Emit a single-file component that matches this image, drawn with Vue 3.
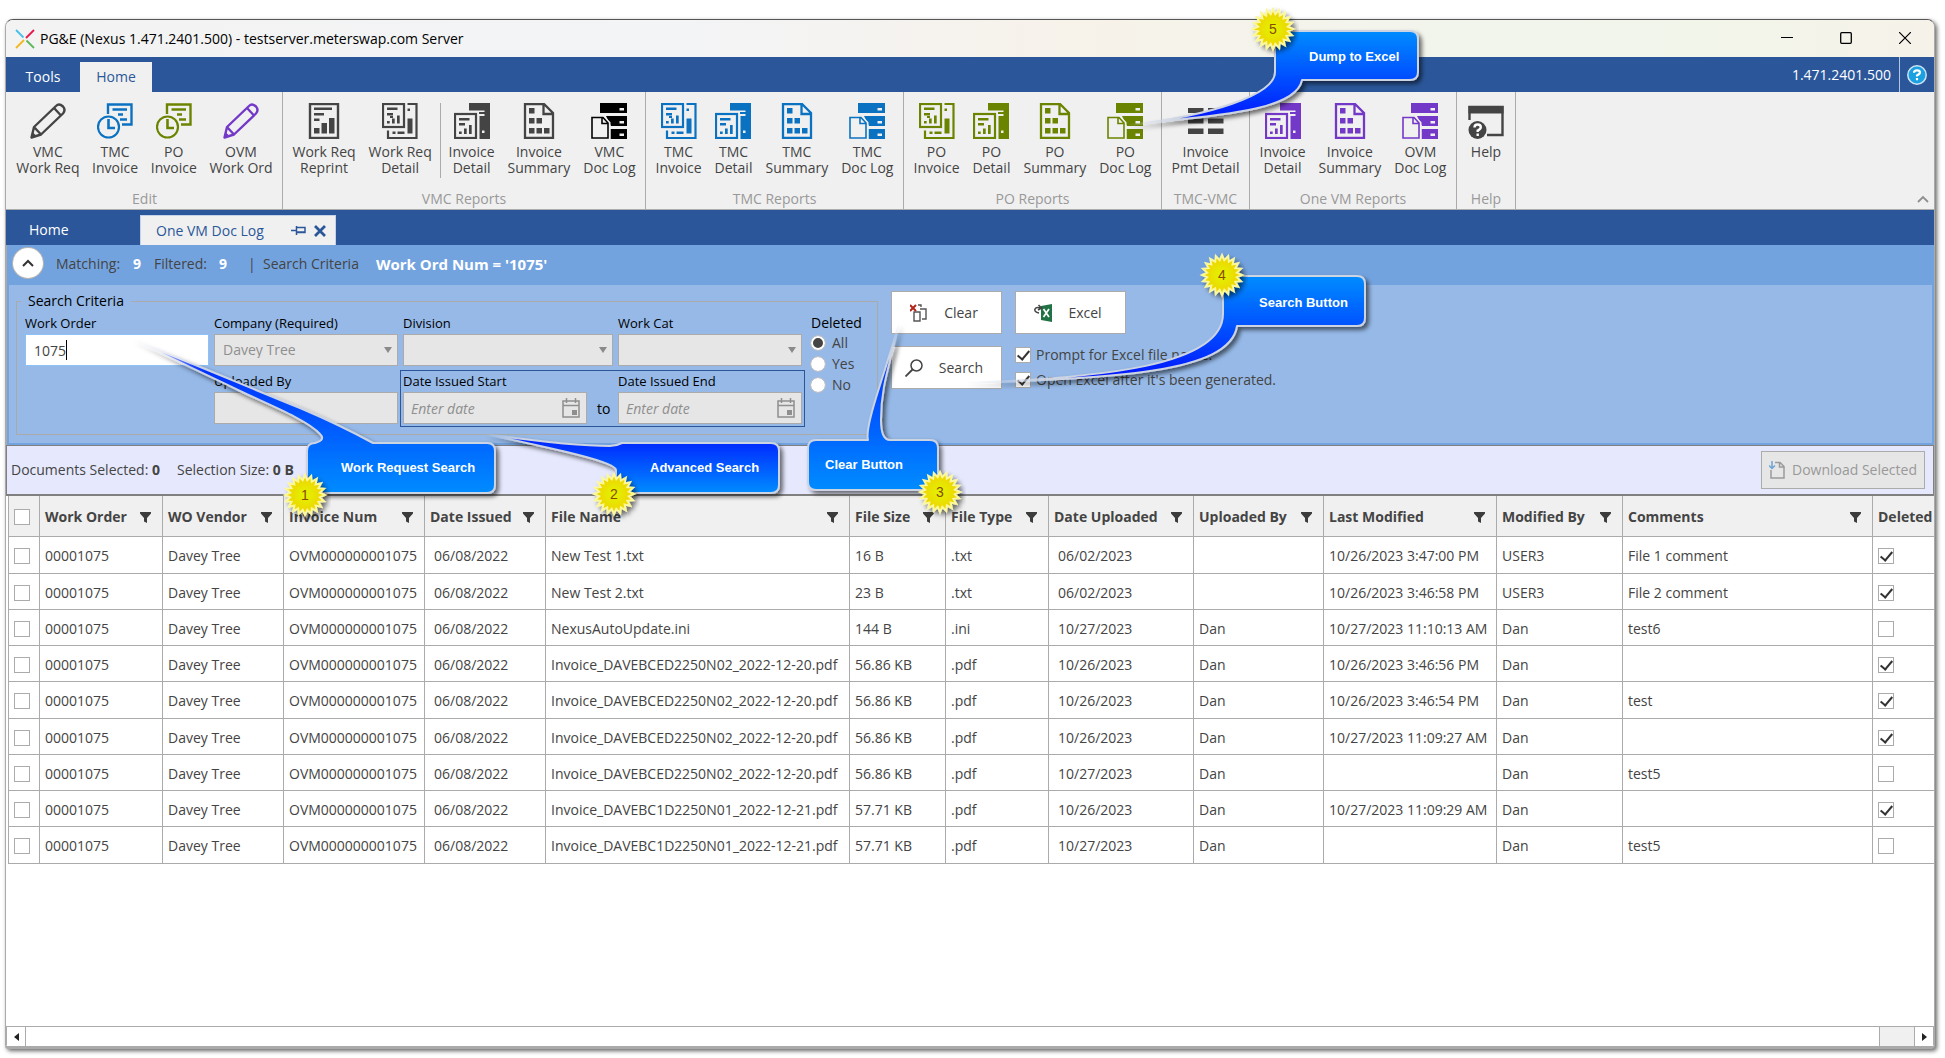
<script setup>
import { ref } from 'vue'

const dark = '#444444'
const blue = '#0b72c1'
const green = '#6b8400'
const purple = '#7338c8'

const groups = [
  {
    name: 'Edit',
    width: 276,
    items: [
      { icon: 'pencil', color: dark, top: 'VMC', bottom: 'Work Req' },
      { icon: 'clock', color: blue, top: 'TMC', bottom: 'Invoice' },
      { icon: 'clock', color: green, top: 'PO', bottom: 'Invoice' },
      { icon: 'pencil', color: purple, top: 'OVM', bottom: 'Work Ord' },
    ],
  },
  {
    name: 'VMC Reports',
    width: 363,
    items: [
      { icon: 'report', color: dark, top: 'Work Req', bottom: 'Reprint' },
      { icon: 'copies', color: dark, top: 'Work Req', bottom: 'Detail' },
      { icon: 'binder', color: dark, top: 'Invoice', bottom: 'Detail', divided: true },
      { icon: 'summary', color: dark, top: 'Invoice', bottom: 'Summary' },
      { icon: 'doclog', color: '#000000', top: 'VMC', bottom: 'Doc Log' },
    ],
  },
  {
    name: 'TMC Reports',
    width: 258,
    items: [
      { icon: 'copies', color: blue, top: 'TMC', bottom: 'Invoice' },
      { icon: 'binder', color: blue, top: 'TMC', bottom: 'Detail' },
      { icon: 'summary', color: blue, top: 'TMC', bottom: 'Summary' },
      { icon: 'doclog', color: blue, top: 'TMC', bottom: 'Doc Log' },
    ],
  },
  {
    name: 'PO Reports',
    width: 258,
    items: [
      { icon: 'copies', color: green, top: 'PO', bottom: 'Invoice' },
      { icon: 'binder', color: green, top: 'PO', bottom: 'Detail' },
      { icon: 'summary', color: green, top: 'PO', bottom: 'Summary' },
      { icon: 'doclog', color: green, top: 'PO', bottom: 'Doc Log' },
    ],
  },
  {
    name: 'TMC-VMC',
    width: 88,
    items: [{ icon: 'payment', color: dark, top: 'Invoice', bottom: 'Pmt Detail' }],
  },
  {
    name: 'One VM Reports',
    width: 207,
    items: [
      { icon: 'binder', color: purple, top: 'Invoice', bottom: 'Detail' },
      { icon: 'summary', color: purple, top: 'Invoice', bottom: 'Summary' },
      { icon: 'doclog', color: purple, top: 'OVM', bottom: 'Doc Log' },
    ],
  },
  {
    name: 'Help',
    width: 59,
    items: [{ icon: 'help', color: dark, top: 'Help', bottom: '' }],
  },
]

const workOrder = ref('1075')
const deletedFilter = ref('All')
const promptName = ref(true)
const openAfter = ref(true)

const columns = [
  { title: 'Work Order', width: 123 },
  { title: 'WO Vendor', width: 121 },
  { title: 'Invoice Num', width: 141 },
  { title: 'Date Issued', width: 121 },
  { title: 'File Name', width: 304 },
  { title: 'File Size', width: 96 },
  { title: 'File Type', width: 103 },
  { title: 'Date Uploaded', width: 145 },
  { title: 'Uploaded By', width: 130 },
  { title: 'Last Modified', width: 173 },
  { title: 'Modified By', width: 126 },
  { title: 'Comments', width: null },
]

const shared = ['00001075', 'Davey Tree', 'OVM000000001075', '06/08/2022']
const rows = [
  [['New Test 1.txt', '16 B', '.txt', '06/02/2023', '', '10/26/2023 3:47:00 PM', 'USER3', 'File 1 comment'], true],
  [['New Test 2.txt', '23 B', '.txt', '06/02/2023', '', '10/26/2023 3:46:58 PM', 'USER3', 'File 2 comment'], true],
  [['NexusAutoUpdate.ini', '144 B', '.ini', '10/27/2023', 'Dan', '10/27/2023 11:10:13 AM', 'Dan', 'test6'], false],
  [['Invoice_DAVEBCED2250N02_2022-12-20.pdf', '56.86 KB', '.pdf', '10/26/2023', 'Dan', '10/26/2023 3:46:56 PM', 'Dan', ''], true],
  [['Invoice_DAVEBCED2250N02_2022-12-20.pdf', '56.86 KB', '.pdf', '10/26/2023', 'Dan', '10/26/2023 3:46:54 PM', 'Dan', 'test'], true],
  [['Invoice_DAVEBCED2250N02_2022-12-20.pdf', '56.86 KB', '.pdf', '10/26/2023', 'Dan', '10/27/2023 11:09:27 AM', 'Dan', ''], true],
  [['Invoice_DAVEBCED2250N02_2022-12-20.pdf', '56.86 KB', '.pdf', '10/27/2023', 'Dan', '', 'Dan', 'test5'], false],
  [['Invoice_DAVEBC1D2250N01_2022-12-21.pdf', '57.71 KB', '.pdf', '10/26/2023', 'Dan', '10/27/2023 11:09:29 AM', 'Dan', ''], true],
  [['Invoice_DAVEBC1D2250N01_2022-12-21.pdf', '57.71 KB', '.pdf', '10/27/2023', 'Dan', '', 'Dan', 'test5'], false],
].map(([cells, deleted]) => ({ cells: [...shared, ...cells], deleted }))

// Starburst badge outline: alternating outer and inner radius.
const points = 20
const burst = Array.from({ length: points * 2 }, (_, i) => {
  const r = i % 2 ? 15 : 20
  const a = (Math.PI * i) / points - Math.PI / 2
  return `${(r * Math.cos(a)).toFixed(1)},${(r * Math.sin(a)).toFixed(1)}`
}).join(' ')

const callouts = [
  {
    n: 1, text: 'Work Request Search', tx: 341, ty: 472, bx: 305, by: 495, grad: 'up',
    tip: [133, 340, 205, 372],
    d: 'M133 340 C190 362 250 388 300 408 Q340 425 373 443 L487 443 Q495 443 495 451 L495 485 Q495 493 487 493 L315 493 Q307 493 307 485 L307 451 Q307 443 315 443 Q326 440 320 434 C308 420 265 403 240 391 C205 374 170 358 133 340 Z',
  },
  {
    n: 2, text: 'Advanced Search', tx: 650, ty: 472, bx: 614, by: 494, grad: 'up',
    tip: [485, 434, 525, 440],
    d: 'M485 434 C520 439 570 446 610 446 Q616 446 622 443 L771 443 Q779 443 779 451 L779 485 Q779 493 771 493 L624 493 Q616 493 616 485 L616 470 C616 462 560 450 485 434 Z',
  },
  {
    n: 3, text: 'Clear Button', tx: 825, ty: 469, bx: 940, by: 492, grad: 'up',
    tip: [899, 323, 893, 352],
    d: 'M899 323 C890 365 881 385 881 420 Q881 440 890 440 L930 440 Q938 440 938 448 L938 482 Q938 490 930 490 L816 490 Q808 490 808 482 L808 448 Q808 440 816 440 L868 440 C864 425 888 365 899 323 Z',
  },
  {
    n: 4, text: 'Search Button', tx: 1259, ty: 307, bx: 1222, by: 275, grad: 'down',
    tip: [965, 383, 1050, 377],
    d: 'M965 383 C1100 378 1223 366 1223 314 L1223 284 Q1223 276 1231 276 L1357 276 Q1365 276 1365 284 L1365 318 Q1365 326 1357 326 L1237 326 C1230 374 1110 378 965 383 Z',
  },
  {
    n: 5, text: 'Dump to Excel', tx: 1309, ty: 61, bx: 1273, by: 29, grad: 'down',
    tip: [1128, 125, 1180, 118],
    d: 'M1128 125 C1210 116 1275 95 1275 72 L1275 39 Q1275 31 1283 31 L1410 31 Q1418 31 1418 39 L1418 72 Q1418 80 1410 80 L1302 80 C1296 112 1210 116 1128 125 Z',
  },
]
</script>

<template>
  <svg class="defs" aria-hidden="true">
    <symbol id="pencil" viewBox="0 0 36 36">
      <path d="M1.500 34.500 4 24 26 3Q29 0 33 3.500 36 7 33 10.500L11 31.500ZM4 24 11 31.500M24 5 31 12.500" fill="none" stroke="currentColor" stroke-width="2.400" stroke-linejoin="round" />
      <path d="M1 35 2.500 29 7 33.500Z" fill="currentColor" />
    </symbol>
    <symbol id="clock" viewBox="0 0 36 36">
      <path d="M11 11V1.500H34.500V21.500H25M15.500 6.500H30M21 11.500H26M23 16.500H30" fill="none" stroke="currentColor" stroke-width="2.400" />
      <circle cx="11.500" cy="24" r="10.500" fill="none" stroke="currentColor" stroke-width="2.200" />
      <path d="M11.500 16V25H18" fill="none" stroke="currentColor" stroke-width="2.600" />
    </symbol>
    <symbol id="report" viewBox="0 0 36 36">
      <rect x="4" y="1" width="28" height="34" fill="none" stroke="currentColor" stroke-width="2.400" />
      <path d="M8 4.500h18v2.500H8zM8 10h10v2.500H8zM8 15.500h5.500v2.500H8zM8 25h5.500v5.500H8zM15.500 20H21v10.500h-5.500zM23 15h5.500v15.500H23z" fill="currentColor" />
    </symbol>
    <symbol id="copies" viewBox="0 0 36 36">
      <rect x="1" y="1" width="21" height="23" fill="none" stroke="currentColor" stroke-width="2.200" />
      <path d="M5 4.500h10.500v2.500H5zM5 10h6v2.500H5zM8 13h3v2H8zM5 18h2.700v2.500H5zM10 15.500h2.700v5H10zM15 12.500h2.700v8H15zM25.500 15.500h5v15h-5zM25.500 5.500h2.500v2.500h-2.500zM10.500 28.500h3v2.500h-3zM15.500 28.500h7v2.500h-7z" fill="currentColor" />
      <path d="M25.500 1H34.500V35H6V27.500" fill="none" stroke="currentColor" stroke-width="2.200" />
    </symbol>
    <symbol id="binder" viewBox="0 0 36 36">
      <path d="M15 0H36V36H25.500V13H30.500V11H25V9H30.500V7.500H15Z" fill="currentColor" />
      <path d="M28 27.500h2.500v2.500H28z" fill="#f0f0f0" />
      <rect x="1" y="11" width="21" height="24" fill="none" stroke="currentColor" stroke-width="2.200" />
      <path d="M5 15h10.500v2.500H5zM5 20h6v2.500H5zM5 28.500h2.700v2.500H5zM10 25.500h2.700v5.500H10zM15 22h2.700v9H15z" fill="currentColor" />
    </symbol>
    <symbol id="summary" viewBox="0 0 36 36">
      <path d="M4 1H23L32 10V35H4ZM22.500 1V11H32" fill="none" stroke="currentColor" stroke-width="2.300" />
      <path d="M8 5h5.500v5.500H8zM8 15h5.500v5.500H8zM15.500 15H21v5.500h-5.500zM8 25h5.500v5.500H8zM15.500 25H21v5.500h-5.500zM23 25h5.500v5.500H23z" fill="currentColor" />
    </symbol>
    <symbol id="doclog" viewBox="0 0 36 36">
      <path d="M9 0H36V10H9ZM15 13H36V23H20ZM19.500 26H36V36H19.500Z" fill="currentColor" />
      <path d="M28.500 5H33v2.500h-4.500zM28.500 18H33v2.500h-4.500zM28.500 30.500H33V33h-4.500z" fill="#f0f0f0" />
      <path d="M1 14.500H12L17.500 20V35.500H1Z" fill="#f0f0f0" stroke="#f0f0f0" stroke-width="4" />
      <path d="M1 14.500H12L17 20V35H1ZM11 14.500V20.500H17" fill="#f0f0f0" stroke="currentColor" stroke-width="1.600" />
    </symbol>
    <symbol id="payment" viewBox="0 0 36 36">
      <path d="M0 5h15.500v5H0zM20 5h15.500v5H20zM0 15.500h15.500v5H0zM20 15.500h15.500v5H20zM0 25.500h15.500v5.500H0zM20 25.500h15.500v5.500H20z" fill="currentColor" />
    </symbol>
    <symbol id="help" viewBox="0 0 36 36">
      <path d="M1.500 17V4H34.500V32H19" fill="none" stroke="currentColor" stroke-width="2.400" />
      <path d="M.5 3h35v7.500H.5z" fill="currentColor" />
      <circle cx="9.500" cy="27" r="9" fill="currentColor" />
      <path d="M6.500 24.500Q6.500 21.500 9.700 21.500 12.800 21.500 12.800 24.200 12.800 26 9.700 27.500V29M9.700 30.500V33" fill="none" stroke="#fff" stroke-width="2.400" />
    </symbol>
    <symbol id="calendar" viewBox="0 0 18 20">
      <path d="M1 3H17V19H1ZM1 7.500H17M4.500 0V5M13.500 0V5" fill="none" stroke="#8f8f8f" stroke-width="1.500" />
      <path d="M10 12h5v5h-5z" fill="#8f8f8f" />
    </symbol>
    <symbol id="funnel" viewBox="0 0 11 11">
      <path d="M0 0H11V1.500L7 6V11L4 9.500V6L0 1.500Z" fill="#3c3c3c" />
    </symbol>
    <symbol id="caret" viewBox="0 0 8 6">
      <path d="M0 0H8L4 6Z" fill="#8a8a8a" />
    </symbol>
  </svg>

  <div class="desktop">
    <main class="window">
      <header class="titlebar">
        <svg class="logo" width="20" height="20" viewBox="0 0 20 20" fill="none" stroke-width="1.800">
          <path d="M1 1 8.500 8.500" stroke="#45c0ea" /><path d="M19 1 11 9" stroke="#e8174b" />
          <path d="M1 19 9 11" stroke="#f4b81c" /><path d="M11.500 11.500 19 19" stroke="#5cb85c" />
        </svg>
        <h1>PG&amp;E (Nexus 1.471.2401.500) - testserver.meterswap.com Server</h1>
        <button class="caption" aria-label="Minimize"><svg width="12" height="12"><path d="M0 5.500H12" stroke="#000" /></svg></button>
        <button class="caption" aria-label="Maximize"><svg width="12" height="12"><rect x=".7" y=".7" width="10.600" height="10.600" rx="1" fill="none" stroke="#000" stroke-width="1.300" /></svg></button>
        <button class="caption" aria-label="Close"><svg width="12" height="12"><path d="M0 0 12 12M12 0 0 12" stroke="#000" stroke-width="1.200" /></svg></button>
      </header>

      <nav class="menu">
        <button class="menu-tab">Tools</button>
        <button class="menu-tab active">Home</button>
        <span class="version">1.471.2401.500</span>
        <button class="menu-help" aria-label="Help">
          <svg width="20" height="20" viewBox="0 0 20 20"><circle cx="10" cy="10" r="9.200" fill="#1ba1e2" stroke="#cfe3f5" stroke-width="1.500" /><path d="M7 7.800Q7 5.300 10 5.300 13 5.300 13 7.600 13 9 10 10.500V11.500M10 13V15.200" fill="none" stroke="#fff" stroke-width="2.200" /></svg>
        </button>
      </nav>

      <section class="ribbon">
        <div v-for="g in groups" :key="g.name" class="group" :style="{ minWidth: g.width + 'px' }">
          <div class="items">
            <template v-for="(it, i) in g.items" :key="i">
              <span v-if="it.divided" class="divider"></span>
              <button class="tool">
                <svg width="36" height="36" :style="{ color: it.color }"><use :href="'#' + it.icon" /></svg>
                <span>{{ it.top }}</span>
                <span>{{ it.bottom }}</span>
              </button>
            </template>
          </div>
          <div class="group-name">{{ g.name }}</div>
        </div>
        <button class="collapse" aria-label="Collapse ribbon"><svg width="12" height="8"><path d="M1 7 6 2 11 7" fill="none" stroke="#8f8f8f" stroke-width="1.800" /></svg></button>
      </section>

      <nav class="docs">
        <button class="doc-home">Home</button>
        <div class="doc-tab">
          <span>One VM Doc Log</span>
          <svg width="15" height="11" viewBox="0 0 15 11"><path d="M0 5.500H5M5.500 1V10M6 2.500H14V7.500H6M6 7H14" fill="none" stroke="#2b579a" stroke-width="1.500" /></svg>
          <svg width="12" height="12" viewBox="0 0 12 12"><path d="M1 1 11 11M11 1 1 11" stroke="#2b579a" stroke-width="2.800" /></svg>
        </div>
      </nav>

      <section class="search">
        <div class="summary">
          <button class="toggle" aria-label="Hide criteria"><svg width="12" height="8"><path d="M1 7 6 2 11 7" fill="none" stroke="#333" stroke-width="2" /></svg></button>
          <span class="s-match">Matching:</span><b class="s-count">9</b>
          <span class="s-filter">Filtered:</span><b class="s-total">9</b>
          <span class="s-bar">|</span><span>Search Criteria</span>
          <b class="s-query">Work Ord Num = '1075'</b>
        </div>

        <div class="panel">
          <fieldset class="criteria">
            <legend>Search Criteria</legend>
            <div class="fields">
              <div class="field">
                <label for="wo">Work Order</label>
                <input id="wo" v-model="workOrder" class="box live" type="text" />
                <i class="cursor"></i>
              </div>
              <div class="field">
                <label for="company">Company (Required)</label>
                <select id="company" class="box" disabled><option>Davey Tree</option></select>
                <svg class="caret" width="8" height="6"><use href="#caret" /></svg>
              </div>
              <div class="field">
                <label for="division">Division</label>
                <select id="division" class="box" disabled></select>
                <svg class="caret" width="8" height="6"><use href="#caret" /></svg>
              </div>
              <div class="field">
                <label for="cat">Work Cat</label>
                <select id="cat" class="box" disabled></select>
                <svg class="caret" width="8" height="6"><use href="#caret" /></svg>
              </div>
              <div class="field second">
                <label for="by">Uploaded By</label>
                <input id="by" class="box" type="text" disabled />
              </div>
              <div class="dates">
                <div class="field">
                  <label for="start">Date Issued Start</label>
                  <input id="start" class="box date" type="text" placeholder="Enter date" disabled />
                  <svg class="cal" width="18" height="20"><use href="#calendar" /></svg>
                </div>
                <span class="to">to</span>
                <div class="field">
                  <label for="end">Date Issued End</label>
                  <input id="end" class="box date" type="text" placeholder="Enter date" disabled />
                  <svg class="cal" width="18" height="20"><use href="#calendar" /></svg>
                </div>
              </div>
            </div>
            <div class="radios" role="radiogroup" aria-labelledby="del">
              <span id="del">Deleted</span>
              <label v-for="o in ['All', 'Yes', 'No']" :key="o"><input v-model="deletedFilter" type="radio" name="deleted" :value="o" />{{ o }}</label>
            </div>
          </fieldset>

          <div class="actions">
            <button class="action">
              <svg width="18" height="18" viewBox="0 0 18 18" fill="none"><path d="M8 1H11V3M10 5H16V15H12M4 8H10V17H4Z" stroke="#555" stroke-width="1.400" /><path d="M0 1 6 7M6 1 0 7" stroke="#b3261e" stroke-width="2" /></svg>
              <span>Clear</span>
            </button>
            <button class="action">
              <svg width="18" height="18" viewBox="0 0 18 18"><path d="M7 2 18 0V18L7 16Z" fill="#217346" /><path d="M9.500 5 15 13M15 5 9.500 13" stroke="#fff" stroke-width="1.700" /><path d="M5 9Q0 8 1 5 2 2.500 7 4M4.500 1 7.500 4 4 6" fill="none" stroke="#444" stroke-width="1.500" /></svg>
              <span>Excel</span>
            </button>
            <button class="action">
              <svg width="18" height="18" viewBox="0 0 18 18"><circle cx="11.500" cy="6.500" r="5.500" fill="none" stroke="#444" stroke-width="1.500" /><path d="M7.500 10.500 .5 17.500" stroke="#444" stroke-width="1.800" /></svg>
              <span>Search</span>
            </button>
            <div class="options">
              <label><input v-model="promptName" class="tick" type="checkbox" />Prompt for Excel file name.</label>
              <label><input v-model="openAfter" class="tick" type="checkbox" />Open Excel after it's been generated.</label>
            </div>
          </div>
        </div>
      </section>

      <div class="selection">
        <span>Documents Selected: <b>0</b></span>
        <span>Selection Size: <b>0 B</b></span>
        <button class="download" disabled>
          <svg width="16" height="18" viewBox="0 0 16 18" fill="none"><path d="M2 9V17H15V5.500L11 1.500H6M10.500 1.500V6H15" stroke="#9a9a9a" stroke-width="1.500" /><path d="M3 0V7M0 4.500 3 7.500 6 4.500" stroke="#6fa3d4" stroke-width="1.500" /></svg>
          <span>Download Selected</span>
        </button>
      </div>

      <div class="grid">
        <table>
          <colgroup>
            <col class="c-tick" />
            <col v-for="c in columns" :key="c.title" :style="c.width ? { width: c.width + 'px' } : null" />
            <col class="c-del" />
          </colgroup>
          <thead>
            <tr>
              <th class="pick"><input class="tick" type="checkbox" aria-label="Select all" /></th>
              <th v-for="c in columns" :key="c.title"><div class="head"><span>{{ c.title }}</span><svg width="11" height="11"><use href="#funnel" /></svg></div></th>
              <th>Deleted</th>
            </tr>
          </thead>
          <tbody>
            <tr v-for="(r, i) in rows" :key="i">
              <td class="pick"><input class="tick" type="checkbox" :aria-label="'Select row ' + (i + 1)" /></td>
              <td v-for="(c, j) in r.cells" :key="j" :class="{ day: j === 3 || j === 7 }">{{ c }}</td>
              <td><input class="tick" type="checkbox" :checked="r.deleted" aria-label="Deleted" /></td>
            </tr>
          </tbody>
        </table>
      </div>

      <div class="scroll">
        <button aria-label="Scroll left"><svg width="5" height="8"><path d="M5 0V8L0 4Z" fill="#222" /></svg></button>
        <div class="track"><div class="thumb"></div></div>
        <button aria-label="Scroll right"><svg width="5" height="8"><path d="M0 0V8L5 4Z" fill="#222" /></svg></button>
      </div>
    </main>

    <svg class="callouts" width="1945" height="1058" viewBox="0 0 1945 1058">
      <defs>
        <linearGradient id="up" x1="0" y1="0" x2="0" y2="1"><stop offset="0" stop-color="#0019ff" /><stop offset="1" stop-color="#008cff" /></linearGradient>
        <linearGradient id="down" x1="0" y1="0" x2="0" y2="1"><stop offset="0" stop-color="#008cff" /><stop offset="1" stop-color="#0010ff" /></linearGradient>
        <radialGradient id="gold"><stop offset="0" stop-color="#e2f500" /><stop offset="1" stop-color="#f0cf00" /></radialGradient>
        <filter id="drop" x="-10%" y="-20%" width="125%" height="150%"><feDropShadow dx="3" dy="3" stdDeviation="2" flood-color="#000" flood-opacity=".55" /></filter>
        <template v-for="c in callouts" :key="c.n">
          <linearGradient :id="'fade' + c.n" gradientUnits="userSpaceOnUse" :x1="c.tip[0]" :y1="c.tip[1]" :x2="c.tip[2]" :y2="c.tip[3]">
            <stop offset="0" stop-color="#fff" stop-opacity="0" /><stop offset="1" stop-color="#fff" />
          </linearGradient>
          <mask :id="'mask' + c.n" maskUnits="userSpaceOnUse" x="0" y="0" width="1945" height="1058"><rect width="1945" height="1058" :fill="`url(#fade${c.n})`" /></mask>
        </template>
      </defs>
      <g v-for="c in callouts" :key="c.n">
        <g :mask="`url(#mask${c.n})`">
          <path :d="c.d" :fill="`url(#${c.grad})`" stroke="#ccd3e2" stroke-width="2" stroke-linejoin="round" filter="url(#drop)" />
        </g>
        <text :x="c.tx" :y="c.ty" class="note">{{ c.text }}</text>
        <g :transform="`translate(${c.bx} ${c.by})`">
          <polygon :points="burst" fill="url(#gold)" stroke="#fbf79c" stroke-width="2" filter="url(#drop)" />
          <text y="5" class="num">{{ c.n }}</text>
        </g>
      </g>
    </svg>
  </div>
</template>

<style>
body { margin: 0; background: #fff; }
</style>

<style scoped>
* { box-sizing: border-box; }
.defs { display: none; }
button, input, select { font: inherit; color: inherit; margin: 0; }
button { border: 0; background: none; padding: 0; }
.desktop {
  position: relative;
  display: flex;
  min-height: 100vh;
  padding: 19px 10px 9px 5px;
  font: 14px/20px "Open Sans", "Noto Sans", sans-serif;
  color: #444;
  overflow: hidden;
}
.window {
  flex: 1;
  min-width: 0;
  display: flex;
  flex-direction: column;
  border: 1px solid #aaa;
  border-top-color: #555;
  border-bottom-width: 3px;
  border-radius: 8px 8px 4px 4px;
  box-shadow: 2px 2px 4px rgba(0, 0, 0, .6);
  background: #fff;
  overflow: hidden;
}
.titlebar {
  display: flex;
  align-items: center;
  height: 37px;
  padding-left: 9px;
  background: linear-gradient(90deg, #f3f3f3 0, #f3f4f6 35%, #f7f2ea 55%, #f2f5ec 75%, #f2f5ea 88%, #f6f2ea 100%);
}
.titlebar h1 { flex: 1; margin: 0 0 0 5px; font: inherit; color: #000; }
.caption { width: 59px; height: 36px; }
.titlebar .logo { flex: none; }
.menu {
  display: flex;
  align-items: flex-end;
  height: 35px;
  background: #2b579a;
  color: #fff;
}
.menu-tab { width: 74px; height: 30px; }
.menu-tab.active { width: 72px; background: #f0f0f0; color: #2b579a; }
.version { margin-left: auto; padding-right: 8px; height: 35px; line-height: 36px; border-right: 1px solid #b5c5de; }
.menu-help { width: 34px; height: 35px; display: grid; place-items: center; }
.ribbon {
  display: flex;
  height: 118px;
  padding-left: 1px;
  background: #f0f0f0;
  border-bottom: 1px solid #ababab;
}
.group { display: flex; flex-direction: column; padding: 11px 3px 0; border-right: 1px solid #ababab; }
.items { display: flex; justify-content: space-around; height: 80px; }
.tool { display: flex; flex-direction: column; align-items: center; padding: 0 5px; line-height: 16px; white-space: nowrap; }
.tool svg { margin-bottom: 5px; }
.divider { width: 1px; height: 75px; background: #ababab; }
.group-name { text-align: center; line-height: 32px; height: 26px; color: #999; }
.collapse { margin-left: auto; align-self: flex-end; padding: 0 5px 6px; line-height: 8px; }
.docs { display: flex; align-items: flex-end; height: 35px; background: #2b579a; color: #fff; }
.doc-home { width: 134px; height: 30px; padding-left: 23px; text-align: left; }
.doc-tab {
  display: flex;
  align-items: center;
  height: 30px;
  width: 196px;
  padding: 0 9px 0 15px;
  border: 1px solid #c5d3ea;
  border-bottom: 0;
  background: #f0f0f0;
  color: #2b579a;
}
.doc-tab span { flex: 1; }
.doc-tab svg { margin-left: 8px; }
.search { background: #73a3df; border-left: 1px solid #aaa; padding: 0 2px 2px; }
.summary { display: flex; align-items: center; height: 40px; padding: 0 0 2px 4px; }
.summary b { color: #fff; }
.toggle { width: 30px; height: 30px; margin: 0 13px 2px 0; border-radius: 50%; background: #fff; box-shadow: 0 0 0 1px #b5b5b5; display: grid; place-items: center; }
.s-match { width: 77px; }
.s-count { width: 21px; }
.s-filter { width: 65px; }
.s-total { width: 29px; }
.s-bar { width: 15px; }
.summary .s-query { margin-left: 17px; font-size: 15px; }
.panel { display: flex; align-items: flex-start; gap: 13px; background: #96b9e7; padding: 6px 7px 8px; }
.criteria { display: flex; width: 862px; flex: none; margin: 0; padding: 4px 4px 10px 8px; border: 1px solid #aaa; color: #000; }
.criteria legend { margin-left: -4px; padding: 0 7px; }
.fields { display: grid; grid-template-columns: 184px 184px 210px 184px; gap: 7px 5px; font-size: 13px; }
.field { position: relative; display: flex; flex-direction: column; gap: 3px; line-height: 16px; }
.second { grid-column: 2; }
.box {
  width: 100%;
  height: 32px;
  padding: 0 8px;
  border: 1px solid #ababab;
  border-radius: 0;
  background: #e6e6e6;
  color: #8f8f8f;
  appearance: none;
  opacity: 1;
  font-size: 14px;
}
.box.live { background: #fff; border-color: #8ec2f7; color: #444; outline: none; }
.cursor { position: absolute; left: 41px; bottom: 6px; width: 1px; height: 20px; background: #000; }
.box.date { padding-left: 7px; font-style: italic; }
.box::placeholder { color: #8f8f8f; opacity: 1; }
.caret { position: absolute; right: 6px; bottom: 13px; }
.cal { position: absolute; right: 7px; bottom: 6px; }
.dates { grid-column: 3 / 5; display: grid; grid-template-columns: 184px 1fr 184px; outline: 1px solid #2b579a; outline-offset: 2px; }
.to { align-self: end; padding-left: 10px; line-height: 30px; font-size: 14px; }
.radios { display: flex; flex-direction: column; margin-left: 9px; line-height: 21px; }
.radios > span { line-height: 16px; margin-bottom: 1px; }
.radios label { display: flex; align-items: center; gap: 7px; color: #444; }
.radios input { appearance: none; width: 14px; height: 14px; border-radius: 50%; background: #fff; border: 2px solid #fff; outline: 1px solid #c0c0c0; }
.radios input:checked { background: #444; }
.actions { display: grid; grid-template-columns: 111px auto; gap: 12px 13px; }
.action { display: flex; align-items: center; justify-content: center; gap: 16px; width: 111px; height: 43px; padding-right: 5px; border: 1px solid #ababab; background: #fff; }
.options { display: flex; flex-direction: column; gap: 5px; margin-top: -1px; }
.options label { display: flex; align-items: center; gap: 5px; }
.tick { appearance: none; flex: none; width: 16px; height: 16px; border: 1px solid #ababab; background: #fff; display: grid; place-items: center; }
.tick:checked::before { content: ""; width: 5px; height: 10px; border: solid #333; border-width: 0 2px 2px 0; transform: translateY(-1px) rotate(40deg); }
.selection {
  display: flex;
  align-items: center;
  gap: 17px;
  height: 51px;
  padding: 0 8px 0 4px;
  border: solid #808080;
  border-width: 1px 1px 2px;
  background: #e6e9fd;
}
.download {
  display: flex;
  align-items: center;
  gap: 7px;
  height: 38px;
  margin-left: auto;
  padding: 0 7px;
  border: 1px solid #ababab;
  background: #e6e6e6;
  color: #999;
}
.grid { flex: 1; padding-left: 2px; overflow: hidden; }
table { width: 100%; table-layout: fixed; border-collapse: separate; border-spacing: 0; border-left: 1px solid #ababab; }
.c-tick { width: 31px; }
.c-del { width: 61px; }
th, td { height: 36px; padding: 2px 0 0 5px; border: solid #ababab; border-width: 0 1px 1px 0; text-align: left; white-space: nowrap; overflow: hidden; line-height: 20px; }
th { height: 41px; background: #f0f0f0; font-weight: 700; }
th:last-child, td:last-child { border-right: 0; }
tbody tr:nth-child(4n + 1) td { height: 37px; }
.head { display: flex; align-items: center; justify-content: space-between; padding-right: 11px; }
td.day { padding-left: 9px; }
.scroll { display: flex; height: 20px; border-top: 1px solid #ababab; }
.scroll button { width: 20px; display: grid; place-items: center; border: solid #ababab; border-width: 0 1px; background: #fff; }
.track { flex: 1; padding-right: 34px; background: #f0f0f0; }
.thumb { height: 100%; background: #fff; border-right: 1px solid #ababab; }
.callouts { position: absolute; left: 0; top: 0; pointer-events: none; }
.note { font: bold 13px "Liberation Sans", sans-serif; fill: #fff; }
.num { font: 14px "Liberation Sans", sans-serif; fill: #8a4a00; text-anchor: middle; }
</style>
